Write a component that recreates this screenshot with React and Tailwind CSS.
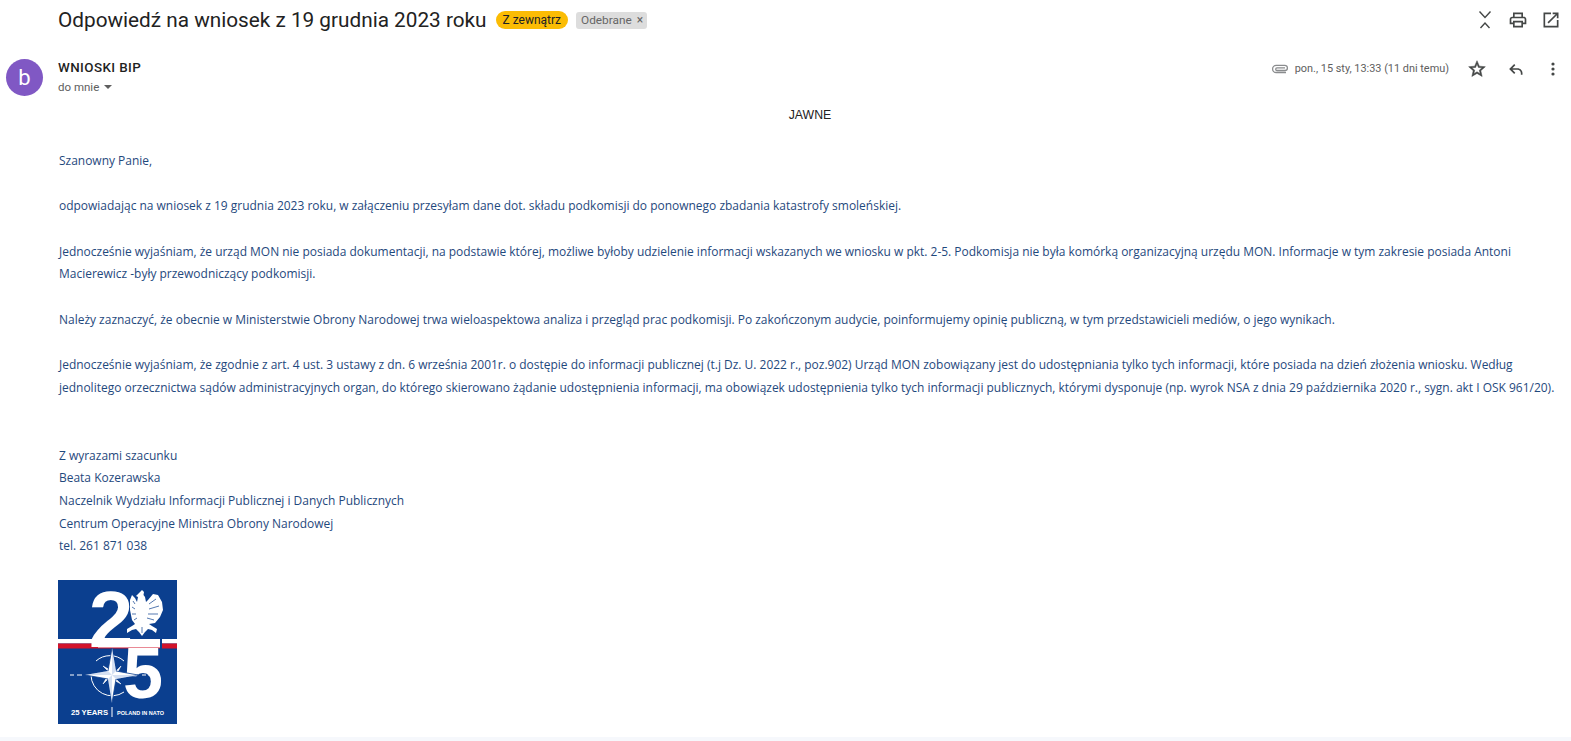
const bodyFont = "font-['Open_Sans','Noto_Sans',sans-serif]";

function Logo() {
  const sans = "'Liberation Sans',sans-serif";
  return (
    <svg width="119" height="144" viewBox="0 0 119 144" className="block overflow-visible">
      <rect width="119" height="144" fill="#0b3f8f" />
      <rect y="59" width="119" height="4.5" fill="#ffffff" />
      <rect y="63.5" width="119" height="5" fill="#d2132a" />
      <rect x="102" y="58" width="2" height="11" fill="#0b3f8f" />
      <text x="53" y="67" fontFamily={sans} fontWeight="700" fontSize="80" fill="#fff" textAnchor="middle">2</text>
      <rect x="40" y="59" width="62" height="8.5" fill="#fff" />
      {/* eagle */}
      <path
        d="M84 10l2 2-.5 3 1.5 2 1 5 2-2 5-6 5 1 4 7 1 8-3 7-5 6-6 1 3 2 5 3-1 4-4-3-4-1-3 3-3 4-3-4-3-3-4 1-5 3 0-4 5-3 3-2-3-4-2-10 0-10 2-5 3 3 2 4 1-5-2-1z"
        fill="#fff"
      />
      <path d="M91 24l7-5M91 29l10-3M90 34l10 0M89 38l7 2M77 24l-2-3M77 29l-3-2M78 34l-4 0M79 38l-3 2M84 47v6" stroke="#0b3f8f" strokeWidth="0.7" fill="none" />
      <text x="85" y="118" fontFamily={sans} fontWeight="700" fontSize="72" fill="#fff" textAnchor="middle">5</text>
      {/* compass */}
      <path d="M66 81A21 21 0 0 0 38 81M33 95A21 21 0 0 0 66 112" fill="none" stroke="#fff" strokeWidth="1" />
      <path d="M54 95l9-9-5 9zM54 95l9 9-9-5zM54 95l-9 9 5-9zM54 95l-9-9 9 5z" fill="#fff" stroke="#fff" strokeWidth="0.6" />
      <path d="M54 68l4 23 22 4-22 4-4 24-4-24-23-4 23-4z" fill="#fff" stroke="#0b3f8f" strokeWidth="0.8" />
      <path d="M54 68l4 23-4 4zM80 95l-22 4-4-4zM54 123l-4-24 4-4zM27 95l23-4 4 4z" fill="#d5e0f2" />
      <path d="M12 95h4M19 95h5M84 95h4M90 95h4" stroke="#fff" strokeWidth="1" />
      <text x="13" y="135" fontFamily={sans} fontWeight="700" fontSize="7.7" fill="#fff">25 YEARS</text>
      <rect x="53.5" y="127" width="1" height="10" fill="#fff" />
      <text x="59" y="135" fontFamily={sans} fontWeight="700" fontSize="4.8" textLength="47" lengthAdjust="spacingAndGlyphs" fill="#fff">POLAND IN NATO</text>
    </svg>
  );
}

function Collapse() {
  return (
    <svg width="20" height="20" viewBox="0 0 20 20" fill="none" stroke="#444746" strokeWidth="1.4">
      <path d="M4.5 1.5L10 7.5l5.5-6M5.5 18L10 13l4.5 5" />
    </svg>
  );
}
function Print() {
  return (
    <svg width="20" height="20" viewBox="0 0 24 24" fill="#444746">
      <path d="M19 8h-1V3H6v5H5c-1.66 0-3 1.34-3 3v6h4v4h12v-4h4v-6c0-1.66-1.34-3-3-3zM8 5h8v3H8V5zm8 14H8v-4h8v4zm4-4h-2v-2H6v2H4v-4c0-.55.45-1 1-1h14c.55 0 1 .45 1 1v4z" />
    </svg>
  );
}
function External() {
  return (
    <svg width="20" height="20" viewBox="0 0 24 24" fill="#444746">
      <path d="M19 19H5V5h7V3H3v18h18v-9h-2v7zM14 3v2h3.59l-9.83 9.83 1.41 1.41L19 6.41V10h2V3h-7z" />
    </svg>
  );
}
function Clip() {
  return (
    <svg width="18" height="12" viewBox="0 0 18 12" fill="none" stroke="#8a8c8e" strokeWidth="1.3">
      <path d="M15 9.5H5.2a3.6 3.6 0 010-7.2h8.6a2.6 2.6 0 010 5.2H6a1.3 1.3 0 010-2.6h8" />
    </svg>
  );
}
function Star() {
  return (
    <svg width="20" height="20" viewBox="0 0 24 24" fill="#444746" stroke="#444746" strokeWidth="0.6">
      <path d="M22 9.24l-7.19-.62L12 2 9.19 8.63 2 9.24l5.46 4.73L5.82 21 12 17.27 18.18 21l-1.63-7.03L22 9.24zM12 15.4l-3.76 2.27 1-4.28-3.32-2.88 4.38-.38L12 6.1l1.71 4.04 4.38.38-3.32 2.88 1 4.28L12 15.4z" />
    </svg>
  );
}
function Reply() {
  return (
    <svg width="20" height="20" viewBox="0 0 24 24" fill="#444746">
      <path d="M21 19h-2v-2c0-2.21-1.79-4-4-4H8.83l3.58 3.59L11 18l-6-6 6-6 1.41 1.41L8.83 11H15c3.31 0 6 2.69 6 6v2z" />
    </svg>
  );
}
function Dots() {
  return (
    <svg width="20" height="20" viewBox="0 0 20 20" fill="#444746">
      <circle cx="10" cy="5" r="1.6" /><circle cx="10" cy="10" r="1.6" /><circle cx="10" cy="15" r="1.6" />
    </svg>
  );
}

function P({ children }) {
  return <p className="m-0">{children}</p>;
}
const Blank = () => <p className="m-0 h-[22.67px]" />;

export default function App() {
  return (
    <div className="w-[1571px] h-[741px] overflow-hidden bg-white flex flex-col font-['Roboto',sans-serif]">
      <div className="h-[40px] pl-[58px] pr-[10px] flex items-center shrink-0">
        <h1 className="m-0 text-[20.75px] leading-[28px] font-normal text-[#222222]">Odpowiedź na wniosek z 19 grudnia 2023 roku</h1>
        <span className="ml-[9px] h-[18px] px-[7px] rounded-[9px] bg-[#fbbc04] text-[#202124] text-[12px] leading-[18px] whitespace-nowrap">Z zewnątrz</span>
        <span className="ml-[8px] h-[17px] pl-[5px] pr-[4px] rounded-[3px] bg-[#dddddd] text-[#666666] text-[11.8px] leading-[17px] flex items-center gap-[5px] whitespace-nowrap">Odebrane <span className="text-[12px]">×</span></span>
        <div className="ml-auto flex items-center gap-[13px]">
          <Collapse /><Print /><External />
        </div>
      </div>
      <div className="h-[61px] pl-[6px] pr-[8px] flex items-start shrink-0">
        <div className="mt-[19px] w-[37px] h-[37px] rounded-full bg-[#8058c4] text-white text-[22px] leading-[37px] text-center shrink-0">b</div>
        <div className="ml-[15px] mt-[19px]">
          <div className="text-[13.4px] leading-[18px] font-medium text-[#1f1f1f] tracking-[0.4px]">WNIOSKI BIP</div>
          <div className="mt-[2px] text-[11.5px] leading-[16px] text-[#5e5e5e] flex items-center gap-[5px]">do mnie <span className="w-0 h-0 border-x-[4px] border-x-transparent border-t-[4px] border-t-[#5e5e5e]" /></div>
        </div>
        <div className="ml-auto mt-[19px] flex items-center">
          <Clip />
          <span className="ml-[6px] text-[10.9px] leading-[16px] text-[#5e5e5e]">pon., 15 sty, 13:33 (11 dni temu)</span>
          <div className="ml-[18px] flex items-center gap-[18px]"><Star /><Reply /><Dots /></div>
        </div>
      </div>
      <div className="grow min-h-0 pl-[59px] flex flex-col">
        <div className="mt-[6px] w-[1502px] text-center text-[12.3px] leading-[16px] text-[#222222] font-['Liberation_Sans',sans-serif]">JAWNE</div>
        <div className={`mt-[27px] text-[11.98px] leading-[22.67px] text-[#1f497d] ${bodyFont}`}>
          <P>Szanowny Panie,</P>
          <Blank />
          <P>odpowiadając na wniosek z 19 grudnia 2023 roku, w załączeniu przesyłam dane dot. składu podkomisji do ponownego zbadania katastrofy smoleńskiej.</P>
          <Blank />
          <P>Jednocześnie wyjaśniam, że urząd MON nie posiada dokumentacji, na podstawie której, możliwe byłoby udzielenie informacji wskazanych we wniosku w pkt. 2-5. Podkomisja nie była komórką organizacyjną urzędu MON. Informacje w tym zakresie posiada Antoni</P>
          <P>Macierewicz -były przewodniczący podkomisji.</P>
          <Blank />
          <P>Należy zaznaczyć, że obecnie w Ministerstwie Obrony Narodowej trwa wieloaspektowa analiza i przegląd prac podkomisji. Po zakończonym audycie, poinformujemy opinię publiczną, w tym przedstawicieli mediów, o jego wynikach.</P>
          <Blank />
          <P>Jednocześnie wyjaśniam, że zgodnie z art. 4 ust. 3 ustawy z dn. 6 września 2001r. o dostępie do informacji publicznej (t.j Dz. U. 2022 r., poz.902) Urząd MON zobowiązany jest do udostępniania tylko tych informacji, które posiada na dzień złożenia wniosku. Według</P>
          <P>jednolitego orzecznictwa sądów administracyjnych organ, do którego skierowano żądanie udostępnienia informacji, ma obowiązek udostępnienia tylko tych informacji publicznych, którymi dysponuje (np. wyrok NSA z dnia 29 października 2020 r., sygn. akt I OSK 961/20).</P>
          <Blank />
          <Blank />
          <P>Z wyrazami szacunku</P>
          <P>Beata Kozerawska</P>
          <P>Naczelnik Wydziału Informacji Publicznej i Danych Publicznych</P>
          <P>Centrum Operacyjne Ministra Obrony Narodowej</P>
          <P>tel. 261 871 038</P>
        </div>
        <div className="mt-[22px] -ml-[1px]"><Logo /></div>
      </div>
      <div className="h-[4px] bg-[#f6f8fc] shrink-0" />
    </div>
  );
}
